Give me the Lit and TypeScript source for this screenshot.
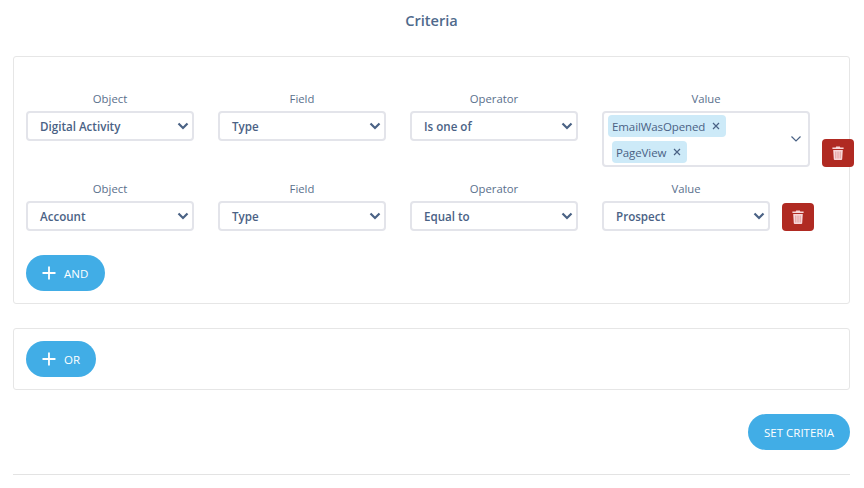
import { LitElement, html, css } from "lit";
import { customElement } from "lit/decorators.js";

const chevron = html`<svg class="chev" viewBox="0 0 12 8" width="12" height="8"><path d="M1.5 1.5 6 6 10.5 1.5" fill="none" stroke="#4a6285" stroke-width="2.2"/></svg>`;
const thinChevron = html`<svg class="chev" viewBox="0 0 12 8" width="12" height="8"><path d="M1.5 1.5 6 6 10.5 1.5" fill="none" stroke="#4a6285" stroke-width="1.2"/></svg>`;
const trash = html`<svg viewBox="0 0 12 14" width="12" height="14"><path fill="#f7d6d8" d="M4.2.6h3.6l.5 1H11.6v1.5H.4V1.6h3.3zM1.2 4h9.6l-.6 9.2c0 .5-.4.8-.9.8H2.7c-.5 0-.9-.3-.9-.8z"/><path stroke="#d98a8c" stroke-width=".8" d="M3.8 5.5v7M6 5.5v7M8.2 5.5v7"/></svg>`;
const plus = html`<svg viewBox="0 0 14 14" width="14" height="14"><path d="M7 .5v13M.5 7h13" stroke="#fff" stroke-width="1.8" fill="none"/></svg>`;
const x = html`<svg class="x" viewBox="0 0 8 8" width="8" height="8"><path d="M1 1l6 6M7 1L1 7" stroke="#4a6285" stroke-width="1.2" fill="none"/></svg>`;

@customElement("app-root")
export class AppRoot extends LitElement {
  static styles = css`
    :host { display: block; width: 864px; height: 488px; overflow: hidden; background: #fff; font-family: "Open Sans", "Noto Sans", sans-serif; color: #4a6285; box-sizing: border-box; padding: 0 14px 0 13px; }
    * { box-sizing: border-box; }
    .title { height: 56px; padding-top: 9px; text-align: center; font-size: 14.6px; font-weight: 560; line-height: 22px; color: #4f6a8c; }
    .card { border: 1px solid #e6e6e6; border-radius: 3px; padding: 12px; }
    .card.main { padding-top: 33px; height: 248px; display: flex; flex-direction: column; }
    .rows { display: flex; flex-direction: column; gap: 13px; }
    .row { display: flex; align-items: flex-start; gap: 24px; }
    .field { width: 168px; flex: none; display: flex; flex-direction: column; }
    .field.wide { width: 208px; }
    .label { height: 21px; line-height: 18px; font-size: 11.3px; text-align: center; color: #5a6f8c; }
    .select { height: 30px; border: 2px solid #e3e4ea; border-radius: 4px; padding: 0 3px 0 12px; font-size: 11.6px; font-weight: 560; display: flex; align-items: center; justify-content: space-between; color: #4a6285; }
    .select.multi { height: 56px; padding: 2px 6px 2px 4px; }
    .tags { display: flex; flex-wrap: wrap; width: 150px; gap: 4px; }
    .tag { height: 22px; background: #cdeaf8; border-radius: 4px; padding: 0 6px 0 4px; display: inline-flex; align-items: center; gap: 7px; font-size: 11.5px; font-weight: 520; letter-spacing: -0.1px; white-space: nowrap; }
    .tag.indent { margin-left: 4px; }
    .x { flex: none; }
    .trash { width: 32px; height: 28px; background: #b02a22; border-radius: 4px; display: flex; align-items: center; justify-content: center; margin-left: -12px; flex: none; align-self: flex-end; }
    .btn { height: 36px; border-radius: 18px; background: #41ade6; color: #fff; font-size: 11.5px; font-weight: 400; display: inline-flex; align-items: center; border: 0; font-family: inherit; }
    .add { padding: 0 16px; gap: 8px; align-self: flex-start; }
    .and { margin-top: 24px; width: 79px; }
    .or { width: 70px; }
    .gap { height: 24px; }
    .or-card { height: 62px; }
    .foot { display: flex; justify-content: flex-end; margin-top: 24px; }
    .set { width: 102px; justify-content: center; }
    hr { margin: 24px 0 0; border: 0; border-top: 1px solid #e3e3e3; }
  `;

  private field(label: string, value: string) {
    return html`<div class="field"><div class="label">${label}</div><div class="select"><span>${value}</span>${chevron}</div></div>`;
  }

  render() {
    return html`
      <div class="title">Criteria</div>
      <div class="card main">
        <div class="rows">
          <div class="row">
            ${this.field("Object", "Digital Activity")}
            ${this.field("Field", "Type")}
            ${this.field("Operator", "Is one of")}
            <div class="field wide">
              <div class="label">Value</div>
              <div class="select multi">
                <div class="tags">
                  <span class="tag">EmailWasOpened ${x}</span>
                  <span class="tag indent">PageView ${x}</span>
                </div>
                ${thinChevron}
              </div>
            </div>
            <div class="trash">${trash}</div>
          </div>
          <div class="row">
            ${this.field("Object", "Account")}
            ${this.field("Field", "Type")}
            ${this.field("Operator", "Equal to")}
            ${this.field("Value", "Prospect")}
            <div class="trash">${trash}</div>
          </div>
        </div>
        <button class="btn add and">${plus}<span>AND</span></button>
      </div>
      <div class="gap"></div>
      <div class="card or-card"><button class="btn add or">${plus}<span>OR</span></button></div>
      <div class="foot"><button class="btn set">SET CRITERIA</button></div>
      <hr />
    `;
  }
}
